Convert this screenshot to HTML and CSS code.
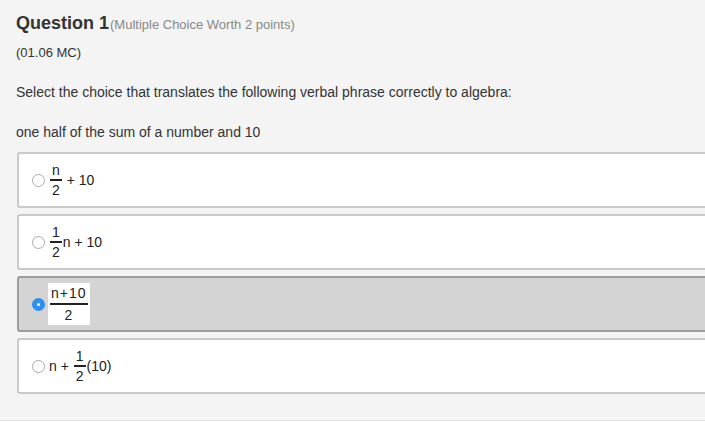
FILE: index.html
```html
<!DOCTYPE html>
<html lang="en">
<head>
    <meta charset="UTF-8">
    <title>Question 1</title>
    <link rel="stylesheet" href="styles.css">
</head>
<body>
    <div class="question">
        <h2 class="title">Question 1<span class="worth">(Multiple Choice Worth 2 points)</span></h2>
        <p class="code">(01.06 MC)</p>
        <p class="prompt">Select the choice that translates the following verbal phrase correctly to algebra:</p>
        <p class="phrase">one half of the sum of a number and 10</p>

        <div class="choices">
            <label class="choice">
                <span class="radio"></span>
                <span class="frac"><span class="num">n</span><span class="den">2</span></span>
                <span class="txt"> + 10</span>
            </label>
            <label class="choice">
                <span class="radio"></span>
                <span class="frac"><span class="num">1</span><span class="den">2</span></span>
                <span class="txt">n + 10</span>
            </label>
            <label class="choice selected">
                <span class="radio"></span>
                <span class="frac boxed"><span class="num">n+10</span><span class="den">2</span></span>
            </label>
            <label class="choice">
                <span class="radio"></span>
                <span class="txt">n + </span>
                <span class="frac"><span class="num">1</span><span class="den">2</span></span>
                <span class="txt">(10)</span>
            </label>
        </div>
    </div>
</body>
</html>
```

FILE: styles.css
```css
html, body {
    margin: 0;
    padding: 0;
    background: #fff;
    overflow: hidden;
}
body {
    font-family: "Liberation Sans", Arial, sans-serif;
    color: #333;
}
.question {
    background: #f4f4f4;
    border-bottom: 1px solid #e2e2e2;
    padding: 13px 0 26px 16px;
}
.title {
    margin: 0;
    font-size: 18px;
    font-weight: bold;
    color: #333;
    line-height: 20px;
}
.worth {
    font-size: 13px;
    font-weight: normal;
    color: #888;
    margin-left: 1px;
}
.code {
    margin: 10px 0 0;
    font-size: 13px;
    line-height: 16px;
}
.prompt {
    margin: 23px 0 0;
    font-size: 14px;
    line-height: 16px;
}
.phrase {
    margin: 24px 0 0;
    font-size: 14px;
    line-height: 16px;
}
.choices {
    margin-top: 12px;
    margin-left: 1px;
    margin-right: -10px;
    display: flex;
    flex-direction: column;
    gap: 6px;
}
.choice {
    display: flex;
    align-items: center;
    height: 52px;
    background: #fff;
    border: 2px solid #c9c9c9;
    border-radius: 3px;
    padding-left: 13px;
    color: #222;
}
.choice.selected {
    background: #d4d4d4;
    border-color: #9c9c9c;
}
.radio {
    width: 11px;
    height: 11px;
    border: 1px solid #aaa;
    border-radius: 50%;
    background: #fff;
    margin-right: 4px;
    flex-shrink: 0;
}
.selected .radio {
    width: 13px;
    height: 13px;
    border: none;
    background: #2f8ff0;
    position: relative;
    margin-right: 3px;
}
.selected .radio::after {
    content: "";
    position: absolute;
    left: 5px;
    top: 5px;
    width: 3px;
    height: 3px;
    border-radius: 50%;
    background: #fff;
}
.frac {
    display: inline-flex;
    flex-direction: column;
    align-items: center;
    line-height: 14px;
    font-size: 14px;
    margin: 0 1px;
}
.frac .num {
    border-bottom: 2px solid #222;
    padding: 0 2px 2px;
}
.frac .den {
    padding-top: 2px;
}
.frac.boxed {
    background: #fff;
    padding: 3px 2px 3px;
    letter-spacing: 1px;
    margin: 0;
}
.frac.boxed .num {
    padding: 0 1px 3px;
}
.frac.boxed .den {
    padding-top: 3px;
}
.txt {
    font-size: 14px;
    white-space: pre;
}
```
